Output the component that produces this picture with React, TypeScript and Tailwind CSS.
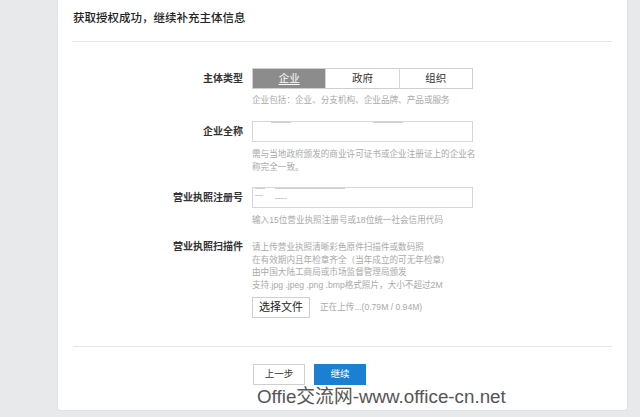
import React from "react";

const cjk = "font-['Liberation_Sans','Noto_Sans_CJK_SC',sans-serif]";

function Hint({ children }: { children: React.ReactNode }) {
  return <p className="w-[226px] text-[8.6px] text-[#a9a9a9]">{children}</p>;
}

function Row({
  label,
  className,
  children,
}: {
  label: string;
  className?: string;
  children: React.ReactNode;
}) {
  return (
    <div className={`flex items-start ${className ?? ""}`}>
      <div className="w-[178px] shrink-0 pr-[9px] text-right text-[10px] font-bold leading-[21px] text-[#333]">
        {label}
      </div>
      <div className="w-[221px]">{children}</div>
    </div>
  );
}

function TextInput({ marks }: { marks: { left: number; top: number; w: number }[] }) {
  return (
    <div className="relative h-[21px] w-full border border-[#d6d6d6] bg-white">
      {marks.map((m, i) => (
        <span
          key={i}
          className="absolute h-px bg-[#cfcfcf]"
          style={{ left: m.left, top: m.top, width: m.w }}
        />
      ))}
    </div>
  );
}

export default function App() {
  const types = ["企业", "政府", "组织"];

  return (
    <div className={`relative h-[417px] w-[640px] overflow-hidden bg-[#e8e9eb] ${cjk}`}>
      <div className="ml-[57px] h-[411px] w-[571px] rounded-b-[4px] border border-t-0 border-[#e1e2e4] bg-white">
        <div className="mx-[15px] flex h-[42px] items-center border-b border-[#e6e6e6] pb-[4px] text-[11.5px] font-medium text-[#222]">
          获取授权成功，继续补充主体信息
        </div>

        <div className="pl-4">
          <Row label="主体类型" className="mt-[26px]">
            <div className="flex h-[21px] border border-[#cfcfcf] text-[10.5px]">
              {types.map((t, i) => (
                <div
                  key={t}
                  className={
                    i === 0
                      ? "flex flex-1 items-center justify-center bg-[#8c8c8c] text-white underline underline-offset-2"
                      : "flex flex-1 items-center justify-center border-l border-[#d6d6d6] bg-white text-[#333]"
                  }
                >
                  {t}
                </div>
              ))}
            </div>
            <div className="mt-[5px] leading-[12px]">
              <Hint>企业包括：企业、分支机构、企业品牌、产品或服务</Hint>
            </div>
          </Row>

          <Row label="企业全称" className="mt-[15px]">
            <TextInput
              marks={[
                { left: 18, top: 0, w: 20 },
                { left: 120, top: 0, w: 30 },
              ]}
            />
            <div className="mt-[6px] leading-[13px]">
              <Hint>需与当地政府颁发的商业许可证书或企业注册证上的企业名称完全一致。</Hint>
            </div>
          </Row>

          <Row label="营业执照注册号" className="mt-[13px]">
            <TextInput
              marks={[
                { left: 2, top: 0, w: 10 },
                { left: 22, top: 0, w: 70 },
                { left: 2, top: 7, w: 8 },
                { left: 22, top: 10, w: 12 },
              ]}
            />
            <div className="mt-[6px] leading-[12px]">
              <Hint>输入15位营业执照注册号或18位统一社会信用代码</Hint>
            </div>
          </Row>

          <div className="mt-[15px] flex items-start">
            <div className="w-[178px] shrink-0 pr-[9px] text-right text-[10px] font-bold leading-[12.5px] text-[#333]">
              营业执照扫描件
            </div>
            <div className="w-[260px] leading-[12.5px]">
              <Hint>请上传营业执照清晰彩色原件扫描件或数码照</Hint>
              <Hint>在有效期内且年检章齐全（当年成立的可无年检章）</Hint>
              <Hint>由中国大陆工商局或市场监督管理局颁发</Hint>
              <Hint>支持.jpg .jpeg .png .bmp格式照片，大小不超过2M</Hint>
              <div className="mt-[6px] flex items-center gap-[10px]">
                <button className="h-[21px] w-[58px] border border-[#cfcfcf] bg-white text-[11px] text-[#222]">
                  选择文件
                </button>
                <span className="text-[8.6px] text-[#a9a9a9]">正在上传...(0.79M / 0.94M)</span>
              </div>
            </div>
          </div>
        </div>

        <div className="mx-[15px] mt-[28px] border-t border-[#e6e6e6]" />

        <div className="mt-[17px] flex gap-[9px] pl-[195px]">
          <button className="h-[21px] w-[52px] border border-[#cfcfcf] bg-white text-[9.5px] text-[#333]">
            上一步
          </button>
          <button className="h-[21px] w-[52px] bg-[#1b7fd2] text-[9.5px] text-white">继续</button>
        </div>
      </div>

      <div className="absolute left-[257px] top-[386px] text-[18.8px] leading-[22px] text-[#555]">
        Offie交流网-www.office-cn.net
      </div>
    </div>
  );
}
